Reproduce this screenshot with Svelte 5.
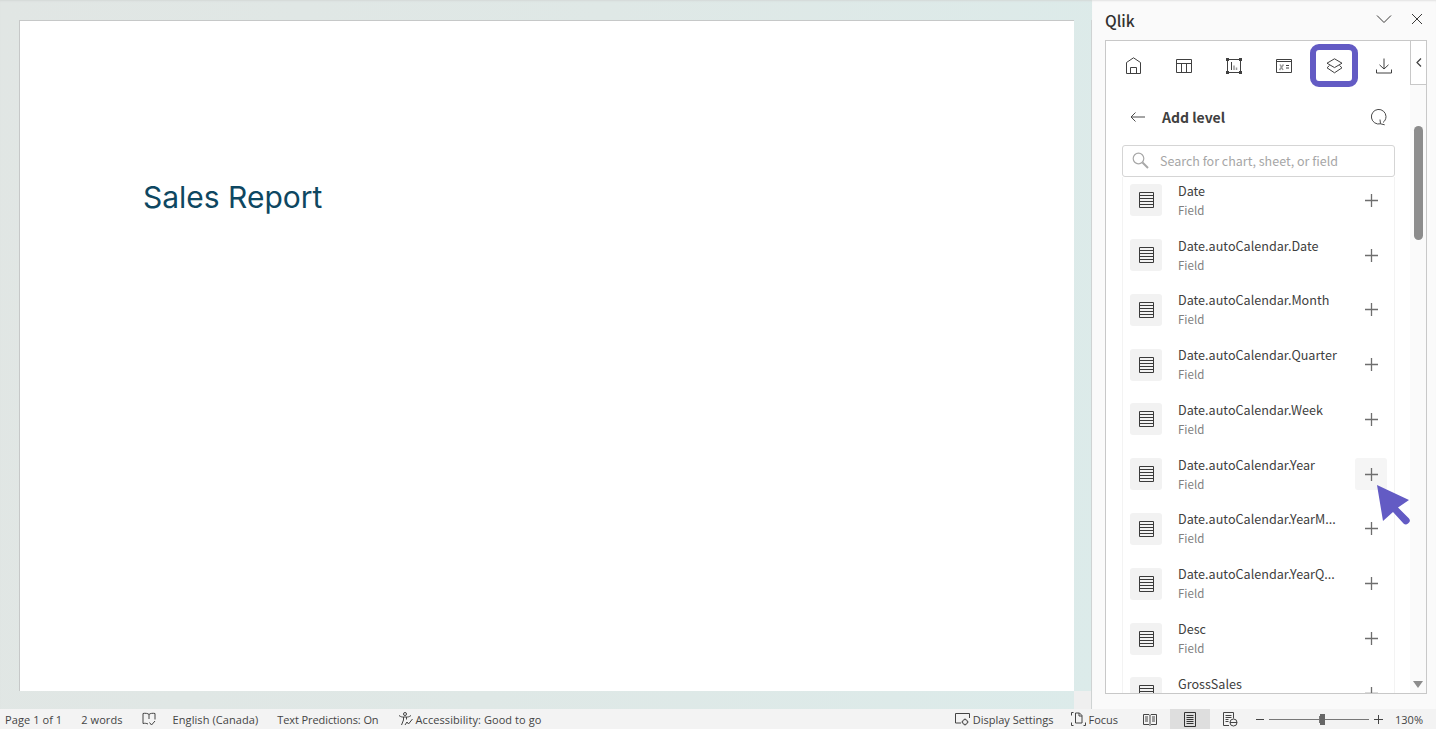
<script>
  const fields = [
    'Date',
    'Date.autoCalendar.Date',
    'Date.autoCalendar.Month',
    'Date.autoCalendar.Quarter',
    'Date.autoCalendar.Week',
    'Date.autoCalendar.Year',
    'Date.autoCalendar.YearM...',
    'Date.autoCalendar.YearQ...',
    'Desc',
    'GrossSales'
  ];
</script>

<div class="app">
  <div class="main">
    <div class="doc">
      <div class="doc-row">
        <div class="page"><h1>Sales Report</h1></div>
        <div class="doc-scroll"></div>
      </div>
      <div class="doc-foot"><div class="corner"></div></div>
    </div>

    <aside class="pane">
      <header class="pane-head">
        <span class="pane-title">Qlik</span>
        <svg class="chev" width="16" height="10" viewBox="0 0 16 10"><path d="M1 1.500l7 7 7-7" /></svg>
        <svg class="close" width="12" height="12" viewBox="0 0 12 12"><path d="M1 1l10 10M11 1L1 11" /></svg>
      </header>

      <div class="frame">
        <div class="content">
          <nav class="tabs">
            <button class="tab" aria-label="Home">
              <svg class="home" width="15" height="17" viewBox="0 0 15 17"><path d="M.5 16.500V5.500L7.500.8l7 4.700v11zM4.500 16.500v-6h6v6" /></svg>
            </button>
            <button class="tab" aria-label="Table">
              <svg width="16" height="14" viewBox="0 0 16 14"><path d="M.5.500h15v13H.5zM.5 4.500h15M5.500 4.500v9M10.500 4.500v9" /></svg>
            </button>
            <button class="tab" aria-label="Chart">
              <svg width="16" height="16" viewBox="0 0 16 16"><path d="M1.500 1.500v13h13v-13z" /><path d="M0 0h3v3H0zM13 0h3v3h-3zM0 13h3v3H0zM13 13h3v3h-3z" class="dot" /><path d="M5.500 4v8" /><path d="M8 7.500V12M10.500 9.500V12" class="soft" /></svg>
            </button>
            <button class="tab" aria-label="Variables">
              <svg width="16" height="14" viewBox="0 0 16 14"><path d="M.5.500h15v13H.5zM.5 2.500h15M10 6.500h3M10 9h3" /><path d="M4 5.500l3 5.500M7.500 5.500L3.500 11" class="soft" /></svg>
            </button>
            <button class="tab active" aria-label="Levels">
              <svg width="17" height="16" viewBox="0 0 17 16"><path d="M8.500.8l7.500 4.400-7.500 4.400-7.500-4.400zM3.500 7.500L1 9.800l7.500 5 7.500-5-2.500-2.300" /></svg>
            </button>
            <button class="tab" aria-label="Download">
              <svg width="16" height="16" viewBox="0 0 16 16"><path d="M8 .5v10.500M3.500 6.800L8 11l4.500-4.200M.5 11.500v3.500h15v-3.500" /></svg>
            </button>
          </nav>

          <div class="title-row">
            <svg width="15" height="10" viewBox="0 0 15 10"><path d="M15 5H1M5.500.5L1 5l4.500 4.500" /></svg>
            <span class="title">Add level</span>
            <svg class="refresh" width="18" height="18" viewBox="0 0 18 18"><path d="M10.500 15.800A7.300 7.300 0 1 1 16 8.500c0 2.500-1.200 4.700-3 6M10 11.500l.5 4.300 4.200 1" /></svg>
          </div>

          <div class="search">
            <svg width="17" height="17" viewBox="0 0 17 17"><circle cx="6.500" cy="6.500" r="5.300" /><path d="M10.500 10.500l5.500 5.500" class="thick" /></svg>
            <span>Search for chart, sheet, or field</span>
          </div>

          <ul class="list">
            {#each fields as name}
              <li class="row">
                <span class="field-icon">
                  <svg width="15" height="16" viewBox="0 0 15 16"><path d="M.5.500h14v15H.5zM.5 3.500h14M.5 6.500h14M.5 9.500h14M.5 12.500h14" /></svg>
                </span>
                <span class="text">
                  <span class="name">{name}</span>
                  <span class="kind">Field</span>
                </span>
                <span class="add" class:hover={name === 'Date.autoCalendar.Year'}>
                  <svg width="13" height="13" viewBox="0 0 13 13"><path d="M6.500 0v13M0 6.500h13" /></svg>
                </span>
              </li>
            {/each}
          </ul>
        </div>

        <div class="scrollbar">
          <div class="collapse">
            <svg width="6" height="9" viewBox="0 0 6 9"><path d="M5 .5l-4 4 4 4" /></svg>
          </div>
          <div class="thumb"></div>
          <div class="arrow"></div>
        </div>
      </div>
    </aside>
  </div>

  <footer class="status">
    <span class="s page-count">Page 1 of 1</span>
    <span class="s words">2 words</span>
    <svg class="s-icon book" width="14" height="14" viewBox="0 0 14 14"><path d="M7 2.500C6 1.300 3 1 1 1.500v10c2 -.4 3.500 -.2 5 .5M7 2.500C8 1.300 11 1 13 1.500v6M7 2.500V7M7.500 10.500l2 2.500 3.500-4" /></svg>
    <span class="s lang">English (Canada)</span>
    <span class="s predict">Text Predictions: On</span>
    <svg class="s-icon access" width="16" height="14" viewBox="0 0 16 14"><circle cx="7" cy="2" r="1.500" /><path d="M1 3.500c2 1.500 3 1.500 4.500 1.500h3C10 5 11 5 13 3.500M5.500 5v3L3.500 13M8.500 5v2.500M7 13l2-3 1.500 2 4-5" /></svg>
    <span class="s a11y">Accessibility: Good to go</span>
    <span class="spacer"></span>
    <svg class="s-icon display" width="15" height="13" viewBox="0 0 15 13"><path d="M6 10H.5V.5h14V5" /><circle cx="10" cy="9" r="2.500" /><path d="M10 5.500v1M10 11.500v1M6.500 9h1M12.500 9h1" /></svg>
    <span class="s dset">Display Settings</span>
    <svg class="s-icon focus" width="15" height="14" viewBox="0 0 15 14"><path d="M.5 3.500v-3h2M.5 10.500v3h2M14.500 10.500v3h-2M4.500 11V1h4l2.500 2.500V11zM8 1v3h3" /></svg>
    <span class="s foc">Focus</span>
    <svg class="s-icon read" width="14" height="13" viewBox="0 0 14 13"><path d="M.5 1.500h5.500l1 1 1-1h5.500v10H8l-1 1-1-1H.5zM7 2.500v9M2 4h3M2 6h3M2 8h3M9 4h3M9 6h3M9 8h3" /></svg>
    <span class="print-view">
      <svg width="12" height="15" viewBox="0 0 12 15"><path d="M.5.500h11v14H.5zM2.500 3.500h7M2.500 5.500h7M2.500 7.500h7M2.500 9.500h7M2.500 11.500h7" /></svg>
    </span>
    <svg class="s-icon web" width="15" height="15" viewBox="0 0 15 15"><path d="M6 13.500H.5V.5h10v6M2.500 3.500h6M2.500 5.500h6M2.500 7.500h3M2.500 9.500h3" /><circle cx="10.500" cy="10.500" r="3.500" /><path d="M7 10.500h7" /></svg>
    <div class="zoom">
      <span class="minus"></span>
      <div class="slider"><span class="tick"></span><span class="knob"></span></div>
      <svg width="9" height="9" viewBox="0 0 9 9"><path d="M4.500 0v9M0 4.500h9" /></svg>
    </div>
    <span class="s pct">130%</span>
  </footer>

  <svg class="cursor" width="34" height="42" viewBox="0 0 34 42">
    <path d="M0 1l32 15-11 7.500 10.800 10.700a3.200 3.200 0 0 1 0 4.500l-.8.800a3.200 3.200 0 0 1-4.500 0L16 28l-10 9z" />
  </svg>
</div>

<style>
  :global(body) {
    margin: 0;
    overflow: hidden;
  }

  .app {
    position: relative;
    width: 1436px;
    height: 729px;
    display: flex;
    flex-direction: column;
    background: #f3f3f3;
    font-family: "Noto Sans CJK JP", "Noto Sans", sans-serif;
  }

  .main {
    flex: 1;
    display: flex;
    min-height: 0;
  }

  .doc {
    width: 1092px;
    display: flex;
    flex-direction: column;
    padding-top: 20px;
    box-sizing: border-box;
    background: linear-gradient(100deg, #e1e6e4 0%, #dfe8e6 50%, #dcebea 100%);
    box-shadow: inset 0 2px 2px -1px #d4d8d7;
  }

  .doc-row {
    display: flex;
    height: 671px;
    padding-left: 19px;
  }

  .page {
    width: 1055px;
    background: #fff;
    border: solid #c6c8c8;
    border-width: 1px 0 0 1px;
    box-sizing: border-box;
    padding: 158px 0 0 123px;
  }

  h1 {
    margin: 0;
    font-family: Inter, "Liberation Sans", sans-serif;
    font-weight: 400;
    font-size: 30px;
    line-height: 36px;
    color: #0e4761;
  }

  .doc-scroll {
    width: 17px;
    flex: none;
    margin-left: auto;
    border-right: 1px solid #cfd3d3;
  }

  .doc-foot {
    flex: 1;
    display: flex;
    justify-content: flex-end;
  }

  .corner {
    width: 17px;
    background: #efefef;
    border-right: 1px solid #cfd3d3;
  }

  .pane {
    width: 344px;
    flex: none;
    display: flex;
    flex-direction: column;
    padding: 0 9px 15px 13px;
    box-sizing: border-box;
    background: #fafafa;
    box-shadow: inset 0 2px 2px -1px #e2e2e2;
  }

  .pane-head {
    height: 40px;
    flex: none;
    display: flex;
    align-items: center;
    padding-bottom: 1px;
    box-sizing: border-box;
  }

  .pane-title {
    font-size: 15.500px;
    font-weight: 500;
    color: #323130;
    margin-right: auto;
  }

  .pane-head svg {
    fill: none;
    stroke: #3b3a39;
    stroke-width: 1;
  }

  .chev {
    margin-right: 19px;
    margin-top: -1px;
  }

  .close {
    margin-right: 4px;
    margin-top: -1px;
  }

  .frame {
    flex: 1;
    min-height: 0;
    display: flex;
    background: #fff;
    border: 1px solid #c8c8c8;
    box-sizing: border-box;
    overflow: hidden;
  }

  .content {
    width: 304px;
    flex: none;
    display: flex;
    flex-direction: column;
    min-height: 0;
  }

  .tabs {
    display: flex;
    height: 47px;
    flex: none;
    align-items: center;
    justify-content: space-between;
    padding: 0 2px;
  }

  .tab {
    width: 48px;
    height: 43px;
    margin-top: 2px;
    margin-left: 2.200px;
    padding: 0;
    display: flex;
    align-items: center;
    justify-content: center;
    background: none;
    border: 6px solid transparent;
    border-radius: 9px;
    box-sizing: border-box;
  }

  .tab svg {
    fill: none;
    stroke: #404040;
    stroke-width: 1;
    flex: none;
  }

  .tab svg .soft {
    stroke: #9a9a9a;
    stroke-width: 1.500;
  }

  .tab svg .dot {
    fill: #404040;
    stroke: none;
  }

  .tab svg.home {
    margin-right: 2px;
    margin-top: -1px;
  }

  .tab.active {
    border-color: #635bc4;
  }

  .title-row {
    height: 40px;
    flex: none;
    display: flex;
    align-items: center;
    padding: 9px 22px 0 24px;
  }

  .title-row svg {
    fill: none;
    stroke: #4a4a4a;
    stroke-width: 1;
    flex: none;
  }

  .title {
    margin-left: 17px;
    font-size: 14px;
    font-weight: 700;
    color: #404040;
  }

  .refresh {
    margin-left: auto;
  }

  .search {
    margin: 8px 0 0 16px;
    width: 273px;
    height: 32px;
    flex: none;
    display: flex;
    align-items: center;
    gap: 11px;
    padding: 0 0 1px 9px;
    box-sizing: border-box;
    background: #fff;
    border: 1px solid #d5d5d5;
    border-radius: 3px;
    font-size: 12.500px;
    color: #a6a6a6;
  }

  .search svg {
    fill: none;
    stroke: #a8a8a8;
    stroke-width: 1.200;
    flex: none;
  }

  .search svg .thick {
    stroke-width: 2;
  }

  .list {
    list-style: none;
    margin: 0 0 0 16px;
    padding: 0;
    width: 273px;
    flex: 1;
    min-height: 0;
    overflow: hidden;
    border: solid #f3f3f3;
    border-width: 0 1px;
    box-sizing: border-box;
  }

  .row {
    height: 54.800px;
    display: flex;
    align-items: center;
    padding: 0 7px;
    box-sizing: border-box;
  }

  .row:first-child {
    margin-top: -4.200px;
  }

  .field-icon {
    width: 32px;
    height: 32px;
    flex: none;
    display: flex;
    align-items: center;
    justify-content: center;
    background: #f2f2f2;
    border-radius: 3px;
  }

  .field-icon svg {
    fill: none;
    stroke: #3a3a3a;
    stroke-width: 1;
  }

  .text {
    flex: 1;
    min-width: 0;
    display: flex;
    flex-direction: column;
    padding: 0 14px 0 16px;
  }

  .name {
    font-size: 12.600px;
    line-height: 18px;
    color: #404040;
    white-space: nowrap;
    overflow: hidden;
    text-overflow: ellipsis;
  }

  .kind {
    font-size: 11.500px;
    line-height: 18px;
    color: #808080;
    margin-top: 1px;
  }

  .add {
    width: 32px;
    height: 32px;
    flex: none;
    display: flex;
    align-items: center;
    justify-content: center;
    border-radius: 3px;
  }

  .add.hover {
    background: #f5f5f5;
  }

  .add svg {
    fill: none;
    stroke: #6e6e6e;
    stroke-width: 1.300;
  }

  .scrollbar {
    position: relative;
    flex: 1;
    background: #fafafa;
  }

  .collapse {
    position: absolute;
    right: 0;
    top: 0;
    width: 16px;
    height: 44px;
    display: flex;
    align-items: center;
    justify-content: center;
    background: #fff;
    border: 1px solid #c8c8c8;
    border-width: 0 0 1px 1px;
    box-sizing: border-box;
  }

  .collapse svg {
    fill: none;
    stroke: #404040;
    stroke-width: 1.200;
  }

  .thumb {
    position: absolute;
    left: 4px;
    top: 85px;
    width: 9px;
    height: 114px;
    background: #8c8c8c;
    border-radius: 5px;
  }

  .arrow {
    position: absolute;
    left: 3px;
    bottom: 5px;
    width: 0;
    height: 0;
    border: solid transparent;
    border-width: 7px 5px 0;
    border-top-color: #8c8c8c;
  }

  .status {
    height: 20px;
    flex: none;
    display: flex;
    align-items: center;
    font-family: "Open Sans", "Noto Sans", sans-serif;
    font-size: 11px;
    color: #444;
    background: #f3f3f3;
    white-space: nowrap;
  }

  .s {
    line-height: 20px;
    padding-top: 1px;
  }

  .s-icon {
    flex: none;
    fill: none;
    stroke: #444;
    stroke-width: 1;
  }

  .page-count, .words, .lang, .a11y {
    letter-spacing: 0.08px;
  }

  .predict {
    letter-spacing: -0.1px;
  }

  .page-count { margin-left: 5px; }
  .words { margin-left: 19px; }
  .book { margin-left: 19px; }
  .lang { margin-left: 17px; }
  .predict { margin-left: 19px; }
  .access { margin-left: 19px; }
  .a11y { margin-left: 2px; }
  .spacer { flex: 1; }
  .dset { margin-left: 3px; }
  .focus { margin-left: 18px; }
  .foc { margin-left: 2px; }
  .read { margin-left: 25px; }

  .print-view {
    width: 40px;
    height: 20px;
    margin-left: 13px;
    display: flex;
    align-items: center;
    justify-content: center;
    background: #dedede;
  }

  .print-view svg {
    fill: none;
    stroke: #333;
    stroke-width: 1;
  }

  .web { margin-left: 13px; }

  .zoom {
    display: flex;
    align-items: center;
    margin-left: 18px;
  }

  .zoom svg {
    fill: none;
    stroke: #444;
    stroke-width: 1;
    margin-left: 5px;
  }

  .minus {
    width: 8px;
    height: 1px;
    background: #444;
  }

  .slider {
    position: relative;
    width: 100px;
    height: 1px;
    margin-left: 5px;
    background: #777;
  }

  .tick {
    position: absolute;
    left: 50px;
    top: -3px;
    width: 1px;
    height: 7px;
    background: #777;
  }

  .knob {
    position: absolute;
    left: 51px;
    top: -5px;
    width: 5px;
    height: 11px;
    background: #666;
  }

  .pct {
    margin-left: 12px;
    margin-right: 13px;
  }

  .cursor {
    position: absolute;
    left: 1377px;
    top: 484px;
    fill: #635bc4;
  }
</style>
